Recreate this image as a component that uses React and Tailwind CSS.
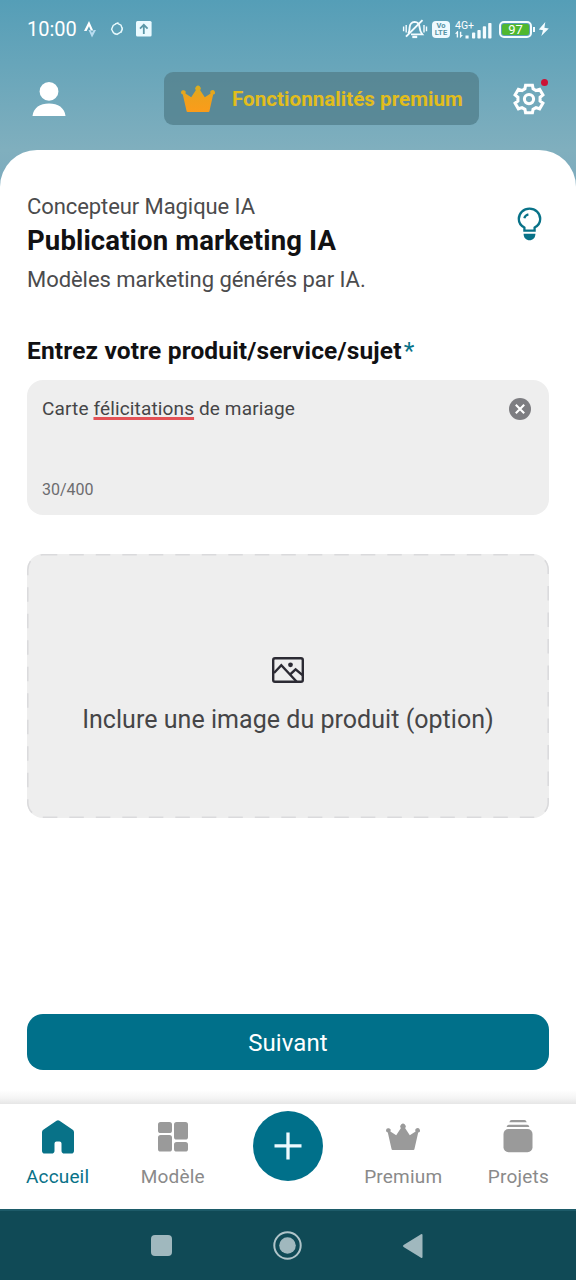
import React from "react";

const CROWN =
  "M1 9.2A2.3 2.3 0 1 1 5.4 10.4L11.2 14.2L15.8 7.2A2.8 2.8 0 1 1 20.2 7.2L24.8 14.2L30.6 10.4A2.3 2.3 0 1 1 33.2 11.6L29.4 28.2Q29.2 29 28.4 29H7.6Q6.8 29 6.6 28.2L2.8 11.6A2.3 2.3 0 0 1 1 9.2z";

function Crown({ className, fill, gradient }) {
  return (
    <svg className={className} viewBox="0 0 36 32">
      {gradient && (
        <defs>
          <linearGradient id="gold" x1="0" y1="0" x2="0" y2="1">
            <stop offset="0" stopColor="#d9ae1e" />
            <stop offset="0.5" stopColor="#f0a01c" />
            <stop offset="1" stopColor="#fb9c1a" />
          </linearGradient>
        </defs>
      )}
      <path d={CROWN} fill={gradient ? "url(#gold)" : fill} />
    </svg>
  );
}

function StatusBar() {
  return (
    <div className="flex h-[58px] items-center pl-[27px] text-white">
      <span className="w-[57px] text-[20px] leading-none whitespace-nowrap">10:00</span>
      <svg className="h-[18px] w-[12px]" viewBox="0 0 12 18">
        <path d="M0 11L5 1L9.2 10.4H6.8L5 6.3L2.6 11z" fill="#fff" />
        <path d="M4.5 10H6.6L8 13L9.6 10H12L8 17.4z" fill="#b9dcf0" />
      </svg>
      <svg className="ml-[14px] h-[18px] w-[14px]" viewBox="0 0 14 18" fill="none" stroke="#e9fafd" strokeWidth="1.4">
        <path d="M7 3.2L11 5.2L12.3 9L10.8 12L7 14.4L3.4 12.8L1.6 9.2L3.2 5.4z" />
        <path d="M5 4L8.5 2.6M12.6 7.5L11.4 12.6M2.4 11.2L5.5 15" strokeWidth="1" />
      </svg>
      <svg className="ml-[12px] h-[16px] w-[16px]" viewBox="0 0 16 16">
        <rect width="15.6" height="15.6" rx="1.5" fill="#eafaff" />
        <path d="M7.8 13V4M4 7.6L7.8 3.8L11.6 7.6" fill="none" stroke="#5c98a8" strokeWidth="1.8" />
      </svg>
      <svg className="ml-[250px] h-[22px] w-[26px]" viewBox="0 0 26 22" fill="none" stroke="#f4fcff" strokeWidth="1.9">
        <path d="M6.3 15.5C7.6 13.8 7.4 12 7.6 9.5C7.9 6.3 9.6 4.2 12.6 3.9C15.8 4 17.3 6.2 17.6 9.3C17.8 12 18 13.6 20.3 16.4H9" />
        <path d="M4 18.6L20.5 2.2" />
        <path d="M10.3 18.9H15.2" strokeWidth="2.4" />
        <path d="M1.6 8.5V13.2M4.2 7V14.5M22 7V14.5M24.5 8.5V13.2" strokeWidth="1.4" />
      </svg>
      <div className="ml-[4px] flex h-[17px] w-[18px] flex-col items-center justify-center rounded-[4px] bg-[#eefaff] text-[7.5px] leading-[7px] font-bold text-[#5593a4]">
        <span>Vo</span>
        <span className="tracking-[0.2px]">LTE</span>
      </div>
      <div className="ml-[5px] flex h-[20px] w-[37px] items-end">
        <div className="flex w-[17px] flex-col">
          <span className="text-[10.5px] leading-[9px] whitespace-nowrap">4G+</span>
          <svg className="h-[9px] w-[17px]" viewBox="0 0 17 9" fill="#f4fcff">
            <path d="M2.4 1L0 3.8H1.7V7.4H3.1V1zM5.2 8L8 5H6.3V1.8H4.9V8zM10.5 5.4H13.6V8.5H10.5z" />
          </svg>
        </div>
        <svg className="h-[18px] w-[20px] shrink-0" viewBox="-4 0 20 18" fill="#f4fcff">
          <rect x="-4" y="11.5" width="3.2" height="6" rx="0.8" />
          <rect x="1.4" y="9" width="3.3" height="8.5" rx="0.8" />
          <rect x="6.8" y="5.2" width="3.3" height="12.3" rx="0.8" />
          <rect x="12.2" y="2" width="3.3" height="15.5" rx="0.8" />
        </svg>
      </div>
      <div className="ml-[7px] flex h-[17px] w-[33px] items-center justify-center rounded-[5px] border-2 border-[#f4fcff] p-[1px]">
        <div className="flex h-full w-full items-center justify-center rounded-[2px] bg-[#50b82f] text-[13px] leading-none">97</div>
      </div>
      <div className="ml-[1px] h-[5px] w-[2px] bg-[#f4fcff]" />
      <svg className="ml-[3px] h-[16px] w-[12px]" viewBox="0 0 12 16">
        <path d="M7.3 1L0.8 8.6L5 9.2L3.3 15L10.8 7.4L6.4 6.8z" fill="#f4fcff" />
      </svg>
    </div>
  );
}

function Header() {
  return (
    <div className="flex items-start pt-[14px] pl-[32px]">
      <svg className="mt-[9px] h-[36px] w-[34px]" viewBox="0 0 34 36" fill="#fff">
        <circle cx="17" cy="10.4" r="9.4" />
        <path d="M0.5 35C1.5 26.5 8 22.4 17 22.4S32.5 26.5 33.5 35z" />
      </svg>
      <button className="ml-[98px] flex h-[53px] w-[315px] items-center rounded-[9px] bg-[#568592]/90 pl-[16px]">
        <Crown className="h-[32px] w-[36px]" gradient />
        <span className="ml-[16px] pt-[2px] text-[20.5px] leading-none font-bold tracking-[0.06px] whitespace-nowrap text-[#e2bd1c]">
          Fonctionnalités premium
        </span>
      </button>
      <div className="relative mt-[11px] ml-[34px] h-[32px] w-[32px]">
        <svg className="h-[32px] w-[32px]" viewBox="0 0 32 32" fill="none" stroke="#fff" strokeWidth="3.1" strokeLinejoin="miter">
          <path d="M12.6 2.2H19.4L20.1 5.8L23 7.5L26.6 6.3L29.9 12L27.1 14.3V17.9L29.9 20.2L26.6 25.8L23 24.6L20.1 26.3L19.4 29.8H12.6L11.9 26.3L9 24.6L5.4 25.8L2.1 20.2L4.9 17.9V14.3L2.1 12L5.4 6.3L9 7.5L11.9 5.8z" />
          <circle cx="16" cy="16.1" r="4.6" />
        </svg>
        <span className="absolute top-[-4px] left-[28px] h-[7px] w-[7px] rounded-full bg-[#cc1236]" />
      </div>
    </div>
  );
}

function Bulb() {
  return (
    <svg className="mt-[12px] mr-[7px] h-[34px] w-[25px]" viewBox="0 0 25 34" fill="none" stroke="#087288" strokeWidth="2.3">
      <path d="M7.4 23.6V20.6C3.8 18.7 1.8 15.6 1.8 12C1.8 6 6.6 1.7 12.5 1.7S23.2 6 23.2 12C23.2 15.6 21.2 18.7 17.6 20.6V23.6z" />
      <path d="M7.3 11.3C7.8 9.3 9.2 7.9 11.4 7.4" strokeWidth="2.2" />
      <path d="M6.6 26.7H18.4C18.4 31 15.8 33.2 12.5 33.2S6.6 31 6.6 26.7z" fill="#087288" stroke="none" />
    </svg>
  );
}

function NavItem({ label, active, children }) {
  return (
    <div className="flex flex-1 flex-col items-center pt-[14px]">
      <div className="flex h-[37px] items-center justify-center">{children}</div>
      <span
        className={
          active
            ? "mt-[10px] text-[19px] leading-[23px] tracking-[0.15px] text-[#087288]"
            : "mt-[10px] text-[19px] leading-[23px] tracking-[0.2px] text-[#8a8a8a]"
        }
      >
        {label}
      </span>
    </div>
  );
}

export default function App() {
  return (
    <div className="flex h-[1280px] w-[576px] flex-col overflow-hidden bg-[linear-gradient(to_bottom,#559eb7_0px,#80afbe_150px,#7daabd_190px)] font-[Roboto,sans-serif]">
      <header className="h-[150px] shrink-0">
        <StatusBar />
        <Header />
      </header>

      <main className="flex min-h-0 flex-1 flex-col rounded-t-[37px] bg-white px-[27px] pt-[42px]">
        <div className="flex h-[138px] justify-between">
          <div className="whitespace-nowrap">
            <p className="pt-[1px] text-[22px] leading-[28px] tracking-[-0.08px] text-[#4b4b4d]">Concepteur Magique IA</p>
            <h1 className="mt-[4px] text-[27.5px] leading-[32px] font-bold tracking-[0.14px] text-[#111113]">Publication marketing IA</h1>
            <p className="mt-[9px] text-[22px] leading-[28px] tracking-[-0.06px] text-[#4b4b4d]">Modèles marketing générés par IA.</p>
          </div>
          <div className="pt-[3px]">
            <Bulb />
          </div>
        </div>
        <h2 className="flex h-[50px] items-start pt-[6px] text-[24.5px] leading-[30px] font-bold tracking-[0.15px] whitespace-nowrap text-[#111113]">
          Entrez votre produit/service/sujet<span className="ml-[2px] font-normal text-[#087288]">*</span>
        </h2>

        <div className="flex h-[135px] shrink-0 flex-col justify-between rounded-[16px] bg-[#eeeeee] px-[15px] pt-[17px] pb-[14px]">
          <div className="flex items-start justify-between">
            <p className="text-[19px] leading-[24px] tracking-[0.14px] text-[#454547]">
              Carte{" "}
              <span className="underline decoration-[#e35256] decoration-[3px] underline-offset-[1.5px] [text-decoration-skip-ink:none]">
                félicitations
              </span>{" "}
              de mariage
            </p>
            <svg className="mt-[1px] mr-[3px] h-[22px] w-[22px]" viewBox="0 0 22 22">
              <circle cx="11" cy="11" r="11" fill="#7d7d81" />
              <path d="M6.8 6.8L15.2 15.2M15.2 6.8L6.8 15.2" stroke="#fff" strokeWidth="2.1" />
            </svg>
          </div>
          <p className="text-[16px] leading-[22px] text-[#6c6c6e]">30/400</p>
        </div>

        <div className="relative mt-[39px] flex h-[264px] shrink-0 flex-col items-center rounded-[16px] bg-[#eeeeee] pt-[102px]">
          <svg className="absolute inset-0 h-full w-full" viewBox="0 0 522 264" fill="none">
            <rect x="0.8" y="0.8" width="520.4" height="262.4" rx="15" stroke="#dadadc" strokeWidth="1.5" strokeDasharray="14.5 12" />
          </svg>
          <svg className="h-[28px] w-[34px]" viewBox="0 0 34 28" fill="none" stroke="#2b2a33" strokeWidth="2.4">
            <rect x="2.2" y="2.2" width="29.6" height="23.6" rx="1.8" />
            <path d="M3 17L10.3 9.2L25.5 25.5M19.5 18.2L24.6 13.3L31.5 19.2" />
            <circle cx="19.5" cy="8.8" r="2.4" fill="#2b2a33" stroke="none" />
          </svg>
          <p className="mt-[20px] text-[25px] leading-[32px] tracking-[0.04px] whitespace-nowrap text-[#454547]">
            Inclure une image du produit (option)
          </p>
        </div>

        <button className="mt-[196px] h-[56px] shrink-0 rounded-[16px] bg-[#00708a] pt-[2px] text-[24px] leading-none tracking-[0.1px] text-white">
          Suivant
        </button>
      </main>

      <div className="h-[14px] shrink-0 bg-[linear-gradient(to_bottom,#ffffff,#f4f4f4_60%,#e6e6e6)]" />
      <nav className="flex h-[105px] shrink-0 bg-white">
        <NavItem label="Accueil" active>
          <svg className="h-[34px] w-[34px]" viewBox="0 0 34 34">
            <path d="M15.5 0.8Q17 -0.2 18.5 0.8L31.7 9.8Q33 10.7 33 12.2V30.7Q33 33.5 30.2 33.5H23.5Q20.5 33.5 20.5 30.7V23.5Q20.5 21.5 18.5 21.5H15.5Q13.5 21.5 13.5 23.5V30.7Q13.5 33.5 10.5 33.5H3.8Q1 33.5 1 30.7V12.2Q1 10.7 2.3 9.8z" fill="#087288" />
          </svg>
        </NavItem>
        <NavItem label="Modèle">
          <svg className="h-[30px] w-[30px]" viewBox="0 0 30 30" fill="#9a9a9a">
            <rect x="0" y="0" width="14" height="11" rx="2.6" />
            <rect x="16" y="0" width="14" height="17.5" rx="2.6" />
            <rect x="0" y="13" width="14" height="16.5" rx="2.6" />
            <rect x="16" y="20" width="14" height="9.5" rx="2.6" />
          </svg>
        </NavItem>
        <div className="flex flex-1 items-start justify-center pt-[7px]">
          <svg className="h-[70px] w-[70px]" viewBox="0 0 70 70">
            <circle cx="35" cy="35" r="35" fill="#00708a" />
            <path d="M35 21.5V48.5M21.5 34.8H48.5" stroke="#eefaff" strokeWidth="3.3" />
          </svg>
        </div>
        <NavItem label="Premium">
          <Crown className="h-[32px] w-[36px]" fill="#9a9a9a" />
        </NavItem>
        <NavItem label="Projets">
          <svg className="mb-[2px] h-[34px] w-[30px]" viewBox="0 0 30 34" fill="#9a9a9a">
            <path d="M6.3 3.2Q7 1 8.5 1H21.5Q23 1 23.7 3.2z" />
            <path d="M3.6 8.1Q4.2 5.8 5.8 5.8H24.2Q25.8 5.8 26.4 8.1z" />
            <rect x="0.5" y="10" width="29" height="23.2" rx="5" />
          </svg>
        </NavItem>
      </nav>

      <footer className="flex h-[71px] shrink-0 items-center border-t-2 border-[#1d5b69] bg-[#104a56] pl-[151px]">
        <div className="h-[21px] w-[21px] rounded-[4px] bg-[#a0b8be]" />
        <svg className="ml-[100px] h-[30px] w-[30px]" viewBox="0 0 30 30">
          <circle cx="15.5" cy="14.5" r="13.2" fill="none" stroke="#b0c4c9" strokeWidth="2" />
          <circle cx="15.5" cy="14.5" r="8.3" fill="#a0b8be" />
        </svg>
        <svg className="ml-[100px] h-[26px] w-[21px]" viewBox="0 0 21 26">
          <path d="M1.6 12L19 1.2Q20.5 0.6 20.5 2V24Q20.5 25.4 19 24.8L1.6 14Q0 13 1.6 12z" fill="#a0b8be" />
        </svg>
      </footer>
    </div>
  );
}
